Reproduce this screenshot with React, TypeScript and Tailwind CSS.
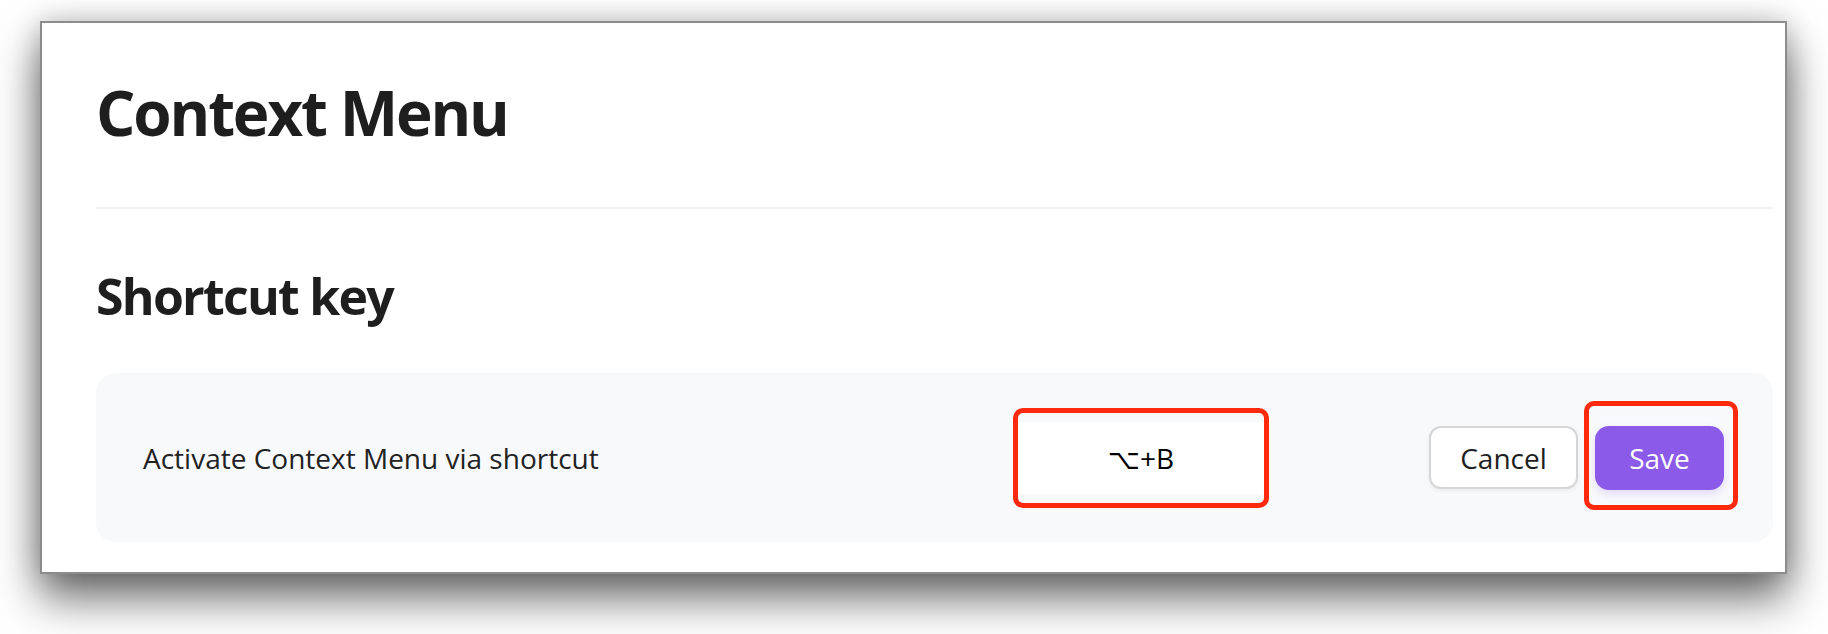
export default function App() {
  return (
    <div className="w-[1828px] h-[634px] bg-white pl-[40px] pt-[21px] font-['Open_Sans',sans-serif] overflow-hidden">
      {/* Window */}
      <div className="w-[1747px] h-[553px] bg-white border-2 border-[#8c8c8c] shadow-[0_24px_42px_rgba(0,0,0,0.58),0_0_26px_rgba(0,0,0,0.2)] pl-[54px] pr-[12px] pt-[58px]">
        <h1 className="text-[62px] leading-[62px] font-bold tracking-[-0.035em] text-[#1e1e1e]">Context Menu</h1>

        <div className="mt-[64px] h-[2px] bg-[#f0f0f0]" />

        <h2 className="mt-[62px] text-[50px] leading-[50px] font-bold tracking-[-0.035em] text-[#1e1e1e]">Shortcut key</h2>

        {/* Setting card */}
        <div className="mt-[52px] h-[169px] rounded-[20px] bg-[#f8f9fb] pl-[47px] pr-[49px] flex items-center">
          <span className="flex-1 text-[28px] text-[#222]">Activate Context Menu via shortcut</span>

          <div className="relative">
            <div className="w-[246px] h-[72px] rounded-[4px] bg-white flex items-center justify-center text-[28px] text-black font-['Open_Sans','DejaVu_Sans',sans-serif]">
              ⌥+B
            </div>
            <div className="absolute -top-[14px] -bottom-[14px] -left-[5px] -right-[5px] border-[5px] border-[#ff2a0d] rounded-[10px] pointer-events-none" />
          </div>

          <div className="ml-[165px] flex items-center gap-[17px]">
            <button className="w-[149px] h-[63px] rounded-[12px] bg-white border-2 border-[#d6d6d6] shadow-[0_2px_4px_rgba(0,0,0,0.06)] text-[28px] text-[#1e1e1e]">
              Cancel
            </button>
            <div className="relative">
              <button className="w-[129px] h-[64px] rounded-[14px] bg-[#8b5ae8] shadow-[0_4px_8px_rgba(139,90,232,0.18)] text-[28px] text-white">
                Save
              </button>
              <div className="absolute -top-[25px] -bottom-[20px] -left-[11px] -right-[14px] border-[5px] border-[#ff2a0d] rounded-[10px] pointer-events-none" />
            </div>
          </div>
        </div>
      </div>
    </div>
  )
}
